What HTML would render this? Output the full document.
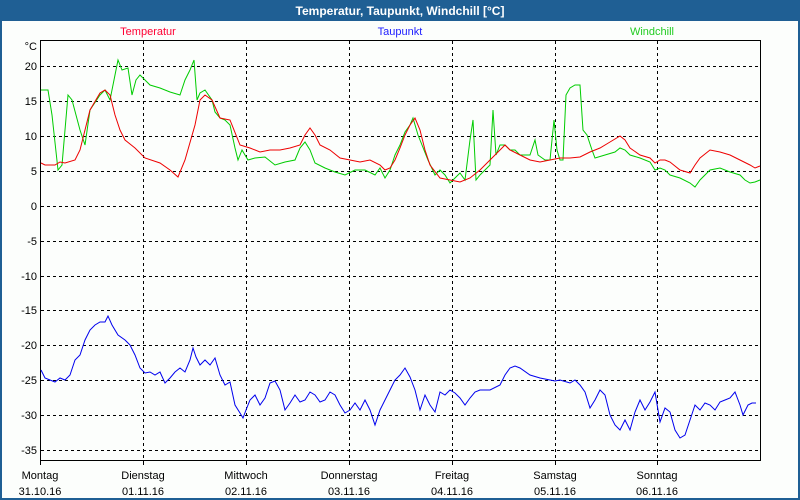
<!DOCTYPE html>
<html><head><meta charset="utf-8"><style>
html,body{margin:0;padding:0;width:800px;height:500px;overflow:hidden;background:#1f5f94;}
svg{display:block}
text{font-family:"Liberation Sans","DejaVu Sans",sans-serif;font-size:11px;}
</style></head><body>
<svg width="800" height="500" xmlns="http://www.w3.org/2000/svg">
<rect x="0" y="0" width="800" height="500" fill="#1f5f94"/>
<rect x="2" y="21" width="796" height="477" fill="#fcfefc"/>
<text x="400" y="15" text-anchor="middle" fill="#fff" style="font-weight:bold;font-size:12px">Temperatur, Taupunkt, Windchill [°C]</text>
<text x="148" y="35" text-anchor="middle" fill="#ff0033">Temperatur</text>
<text x="400" y="35" text-anchor="middle" fill="#2020ff">Taupunkt</text>
<text x="652" y="35" text-anchor="middle" fill="#22cc22">Windchill</text>
<g stroke="#000" stroke-width="1" stroke-dasharray="3,3" fill="none">
<path d="M143.5 41V460M246.5 41V460M349.5 41V460M452.5 41V460M555.5 41V460M657.5 41V460"/>
<path d="M41 66.5H760M41 101.5H760M41 136.5H760M41 171.5H760M41 206.5H760M41 241.5H760M41 276.5H760M41 310.5H760M41 345.5H760M41 380.5H760M41 415.5H760M41 450.5H760"/>
</g>
<rect x="40.5" y="40.5" width="720" height="420" fill="none" stroke="#000"/>
<path d="M40.5 461v4M143.5 461v4M246.5 461v4M349.5 461v4M452.5 461v4M555.5 461v4M657.5 461v4" stroke="#000"/>
<g text-anchor="end" fill="#000">
<text x="37" y="50">°C</text>
<text x="37" y="70">20</text><text x="37" y="105">15</text><text x="37" y="140">10</text>
<text x="37" y="175">5</text><text x="37" y="210">0</text><text x="37" y="245">-5</text>
<text x="37" y="280">-10</text><text x="37" y="314">-15</text><text x="37" y="349">-20</text>
<text x="37" y="384">-25</text><text x="37" y="419">-30</text><text x="37" y="454">-35</text>
</g>
<g text-anchor="middle" fill="#000">
<text x="40" y="479">Montag</text><text x="40" y="495">31.10.16</text>
<text x="143" y="479">Dienstag</text><text x="143" y="495">01.11.16</text>
<text x="246" y="479">Mittwoch</text><text x="246" y="495">02.11.16</text>
<text x="349" y="479">Donnerstag</text><text x="349" y="495">03.11.16</text>
<text x="452" y="479">Freitag</text><text x="452" y="495">04.11.16</text>
<text x="555" y="479">Samstag</text><text x="555" y="495">05.11.16</text>
<text x="657" y="479">Sonntag</text><text x="657" y="495">06.11.16</text>
</g>
<polyline fill="none" stroke="#00cc00" stroke-width="1" points="41,90 48,90 52,115 58,170 62,165 68,95 72,100 80,130 85,145 90,110 100,95 105,90 110,100 115,75 118,60 122,70 128,68 132,95 136,80 140,75 150,85 160,88 170,92 180,95 185,80 190,70 194,60 197,100 200,93 205,90 212,100 215,112 220,118 225,120 230,125 235,148 238,160 242,150 248,160 255,158 265,157 275,165 285,162 295,160 300,148 305,142 310,150 315,163 325,168 335,172 345,175 355,170 365,170 375,175 380,168 385,178 390,170 395,155 400,145 405,132 410,125 413,118 418,135 422,145 428,160 435,175 440,170 445,175 450,183 455,178 460,173 465,180 470,140 473,120 476,180 480,175 485,170 490,165 493,110 496,155 500,145 505,145 510,150 515,150 520,155 525,155 530,155 535,140 538,155 545,160 550,160 554,120 557,150 560,160 563,160 566,95 570,88 575,85 580,85 583,130 587,135 592,150 595,158 605,155 615,152 620,148 625,150 630,155 640,158 650,162 655,170 660,168 665,170 670,175 680,178 690,183 695,187 700,180 710,170 720,168 730,172 740,175 745,180 750,183 755,182 760,180"/>
<polyline fill="none" stroke="#ee0000" stroke-width="1" points="41,163 45,165 55,165 60,162 65,163 75,160 80,150 85,130 90,110 100,93 105,90 110,95 115,115 120,130 125,140 135,148 145,158 160,163 170,170 178,177 185,160 195,125 200,100 205,95 212,100 220,118 230,120 240,145 250,148 260,152 270,150 280,150 290,148 300,145 305,135 310,128 315,135 320,145 330,150 340,158 350,160 360,162 370,160 380,165 385,170 390,168 395,160 400,148 405,135 410,125 415,118 420,130 425,150 430,165 440,178 450,180 460,182 470,178 480,170 490,160 500,150 505,145 510,150 520,155 530,160 540,162 550,160 560,158 570,158 580,157 590,152 600,148 610,142 620,136 625,140 630,148 640,155 650,158 655,163 660,160 665,160 670,162 680,170 690,173 695,165 700,158 710,150 720,152 730,155 740,160 750,165 755,168 760,166"/>
<polyline fill="none" stroke="#0000ee" stroke-width="1" points="41,370 45,378 50,380 55,382 60,378 65,380 70,375 75,360 80,355 85,340 90,330 95,325 100,322 105,322 108,316 112,325 118,335 125,340 130,345 135,355 140,368 145,373 150,372 155,375 160,372 165,383 170,378 175,372 180,368 185,372 190,360 193,348 196,357 200,365 205,360 210,365 215,358 220,375 225,385 230,382 235,405 240,413 243,418 246,410 250,400 255,395 260,405 265,398 270,383 275,381 280,390 285,410 290,403 295,395 300,402 305,400 310,392 315,395 320,402 325,400 330,392 335,395 340,405 345,413 350,410 355,403 360,410 365,400 370,410 375,425 380,410 385,400 390,390 395,380 400,375 405,368 410,377 415,390 420,410 425,395 430,405 435,412 440,392 445,395 450,390 455,393 460,398 465,405 470,398 475,392 480,390 490,390 500,385 505,375 510,368 515,366 520,368 530,375 540,378 550,380 555,381 560,380 570,383 575,380 580,385 585,392 590,408 595,400 600,390 605,395 610,415 615,425 620,430 625,420 630,430 635,412 640,400 645,410 650,402 655,392 660,422 665,408 670,412 675,430 680,438 685,435 690,420 695,405 700,410 705,403 710,405 715,410 720,402 725,400 730,398 735,392 740,405 743,415 748,405 752,403 756,403"/>
</svg>
</body></html>
